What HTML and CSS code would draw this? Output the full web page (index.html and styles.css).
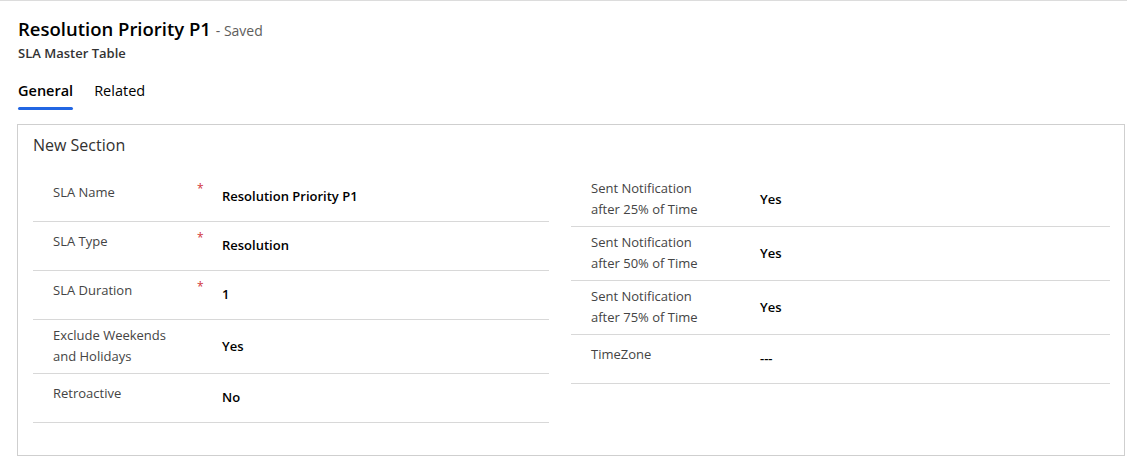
FILE: index.html
```html
<!DOCTYPE html>
<html>
  <head>
    <title>Resolution Priority P1</title>
    <link rel="stylesheet" href="styles.css">
  </head>
  <body>
    <div class="header">
      <h1>Resolution Priority P1 <span class="status">- Saved</span></h1>
      <div class="entity">SLA Master Table</div>
    </div>

    <ul class="tabs">
      <li class="active">General</li>
      <li>Related</li>
    </ul>

    <div class="section">
      <h2>New Section</h2>
      <div class="columns">
        <div class="column">
          <div class="field">
            <div class="label"><span class="name">SLA Name</span><span class="req">*</span></div>
            <div class="value">Resolution Priority P1</div>
          </div>
          <div class="field">
            <div class="label"><span class="name">SLA Type</span><span class="req">*</span></div>
            <div class="value">Resolution</div>
          </div>
          <div class="field">
            <div class="label"><span class="name">SLA Duration</span><span class="req">*</span></div>
            <div class="value">1</div>
          </div>
          <div class="field">
            <div class="label wrap"><span class="name">Exclude Weekends<br>and Holidays</span></div>
            <div class="value">Yes</div>
          </div>
          <div class="field">
            <div class="label"><span class="name">Retroactive</span></div>
            <div class="value">No</div>
          </div>
        </div>

        <div class="column">
          <div class="field">
            <div class="label wrap"><span class="name">Sent Notification<br>after 25% of Time</span></div>
            <div class="value">Yes</div>
          </div>
          <div class="field">
            <div class="label wrap"><span class="name">Sent Notification<br>after 50% of Time</span></div>
            <div class="value">Yes</div>
          </div>
          <div class="field">
            <div class="label wrap"><span class="name">Sent Notification<br>after 75% of Time</span></div>
            <div class="value">Yes</div>
          </div>
          <div class="field">
            <div class="label"><span class="name">TimeZone</span></div>
            <div class="value">---</div>
          </div>
        </div>
      </div>
    </div>
  </body>
</html>
```

FILE: styles.css
```css
* {
  box-sizing: border-box;
}
body {
  margin: 0;
  border-top: 1px solid #dcdcdc;
  font-family: "Open Sans", Arial, sans-serif;
  color: #323130;
  background: #fff;
}
.header {
  padding: 14px 18px 0;
}
h1 {
  margin: 0;
  font-size: 18.5px;
  line-height: 28px;
  font-weight: 600;
  color: #000;
}
.status {
  font-size: 14px;
  font-weight: 400;
  color: #605e5c;
}
.entity {
  font-size: 13px;
  line-height: 16px;
  font-weight: 600;
  color: #333;
}
.tabs {
  display: flex;
  gap: 21px;
  list-style: none;
  margin: 20px 0 0;
  padding: 0 18px;
}
.tabs li {
  position: relative;
  font-size: 14.5px;
  line-height: 20px;
  padding-bottom: 9px;
  color: #000;
}
.tabs li.active {
  font-weight: 600;
}
.tabs li.active::after {
  content: "";
  position: absolute;
  left: 0;
  right: 0;
  bottom: 0;
  height: 3px;
  border-radius: 2px;
  background: #2266e3;
}
.section {
  margin: 14px 2px 0 17px;
  border: 1px solid #cfcfcf;
  padding: 0 14px 33px 15px;
  height: 332px;
}
h2 {
  margin: 0;
  padding-top: 9px;
  font-size: 16px;
  line-height: 22px;
  font-weight: 400;
  color: #323130;
  height: 48px;
}
.columns {
  display: grid;
  grid-template-columns: 516px 539px;
  gap: 22px;
}
.field {
  display: flex;
  align-items: center;
  min-height: 49px;
  padding: 5px 0 6px;
  border-bottom: 1px solid #d8d8d8;
}
.label {
  display: flex;
  flex: none;
  align-self: flex-start;
  width: 189px;
  padding: 4px 0 0 20px;
  font-size: 13px;
  line-height: 21px;
  color: #444;
}
.label.wrap {
  padding-top: 0;
}
.name {
  width: 144px;
}
.req {
  color: #d13438;
  font-size: 12px;
  line-height: 14px;
}
.value {
  font-size: 13px;
  font-weight: 600;
  line-height: 21px;
  color: #000;
}
```
